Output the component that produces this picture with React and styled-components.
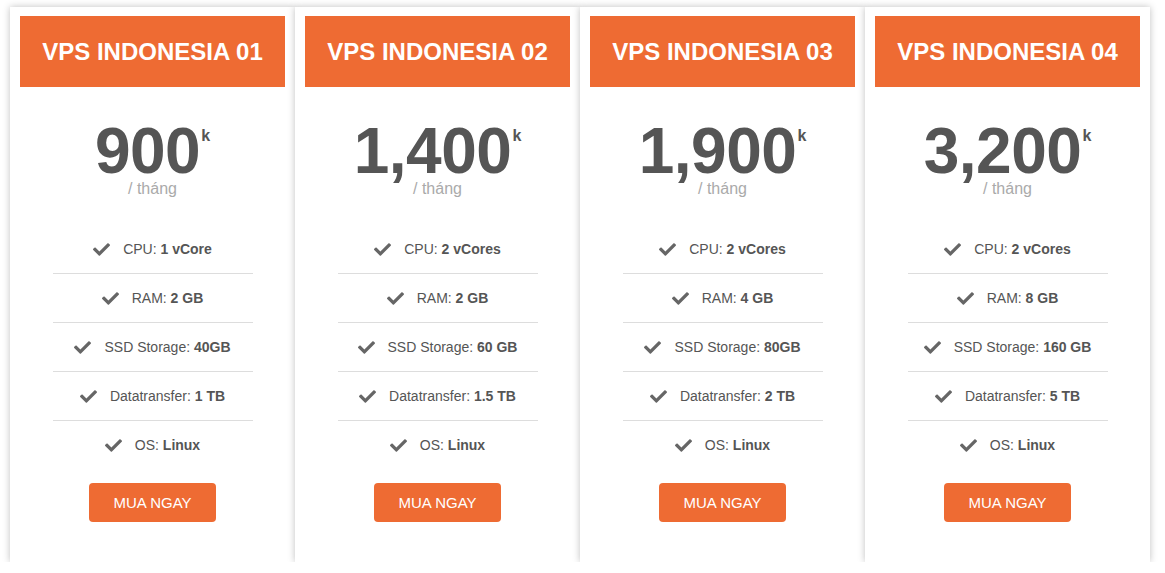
import React from "react";
import styled, { createGlobalStyle } from "styled-components";
import { FaCheck } from "react-icons/fa";

const GlobalStyle = createGlobalStyle`
  body {
    margin: 0;
    background: #fff;
    font-family: "Liberation Sans", Arial, sans-serif;
  }
`;

const Row = styled.div`
  display: flex;
  padding: 7px 10px 0;
`;

const Card = styled.div`
  width: 285px;
  box-sizing: border-box;
  padding: 9px 10px 40px;
  background: #fff;
  box-shadow: 0 0 7px rgba(0, 0, 0, 0.25);
  display: flex;
  flex-direction: column;
  align-items: center;
`;

const Header = styled.div`
  width: 100%;
  height: 71px;
  background: #ee6b33;
  color: #fff;
  font-size: 24px;
  font-weight: 700;
  display: flex;
  align-items: center;
  justify-content: center;
`;

const Price = styled.div`
  margin-top: 38px;
  display: flex;
  align-items: flex-start;
  color: #555;
  font-weight: 700;
`;

const Amount = styled.span`
  font-size: 64px;
  line-height: 52px;
  letter-spacing: -0.5px;
`;

const Unit = styled.span`
  font-size: 16px;
  line-height: 16px;
  margin-top: 3px;
  margin-left: 1px;
`;

const Period = styled.div`
  color: #aaa;
  font-size: 16px;
  line-height: 16px;
  margin-top: 4px;
`;

const Features = styled.ul`
  list-style: none;
  margin: 28px 0 0;
  padding: 0;
  width: 200px;
`;

const Feature = styled.li`
  height: 48px;
  display: flex;
  align-items: center;
  justify-content: center;
  gap: 13px;
  font-size: 14px;
  color: #555;
  border-bottom: 1px solid ${(p) => (p.$last ? "transparent" : "#ddd")};
  b {
    font-weight: 700;
  }
`;

const Check = styled(FaCheck)`
  color: #666;
  font-size: 17px;
`;

const Button = styled.button`
  margin-top: 13px;
  width: 127px;
  height: 39px;
  border: none;
  border-radius: 4px;
  background: #ee6b33;
  color: #fff;
  font-family: inherit;
  font-size: 15px;
  cursor: pointer;
`;

const plans = [
  { name: "VPS INDONESIA 01", price: "900", cpu: "1 vCore", ram: "2 GB", ssd: "40GB", bw: "1 TB" },
  { name: "VPS INDONESIA 02", price: "1,400", cpu: "2 vCores", ram: "2 GB", ssd: "60 GB", bw: "1.5 TB" },
  { name: "VPS INDONESIA 03", price: "1,900", cpu: "2 vCores", ram: "4 GB", ssd: "80GB", bw: "2 TB" },
  { name: "VPS INDONESIA 04", price: "3,200", cpu: "2 vCores", ram: "8 GB", ssd: "160 GB", bw: "5 TB" },
];

const App = () => (
  <>
    <GlobalStyle />
    <Row>
      {plans.map((p) => {
        const specs = [
          ["CPU", p.cpu],
          ["RAM", p.ram],
          ["SSD Storage", p.ssd],
          ["Datatransfer", p.bw],
          ["OS", "Linux"],
        ];
        return (
          <Card key={p.name}>
            <Header>{p.name}</Header>
            <Price>
              <Amount>{p.price}</Amount>
              <Unit>k</Unit>
            </Price>
            <Period>/ tháng</Period>
            <Features>
              {specs.map(([label, value], i) => (
                <Feature key={label} $last={i === specs.length - 1}>
                  <Check />
                  <span>
                    {label}: <b>{value}</b>
                  </span>
                </Feature>
              ))}
            </Features>
            <Button>MUA NGAY</Button>
          </Card>
        );
      })}
    </Row>
  </>
);

export default App;
